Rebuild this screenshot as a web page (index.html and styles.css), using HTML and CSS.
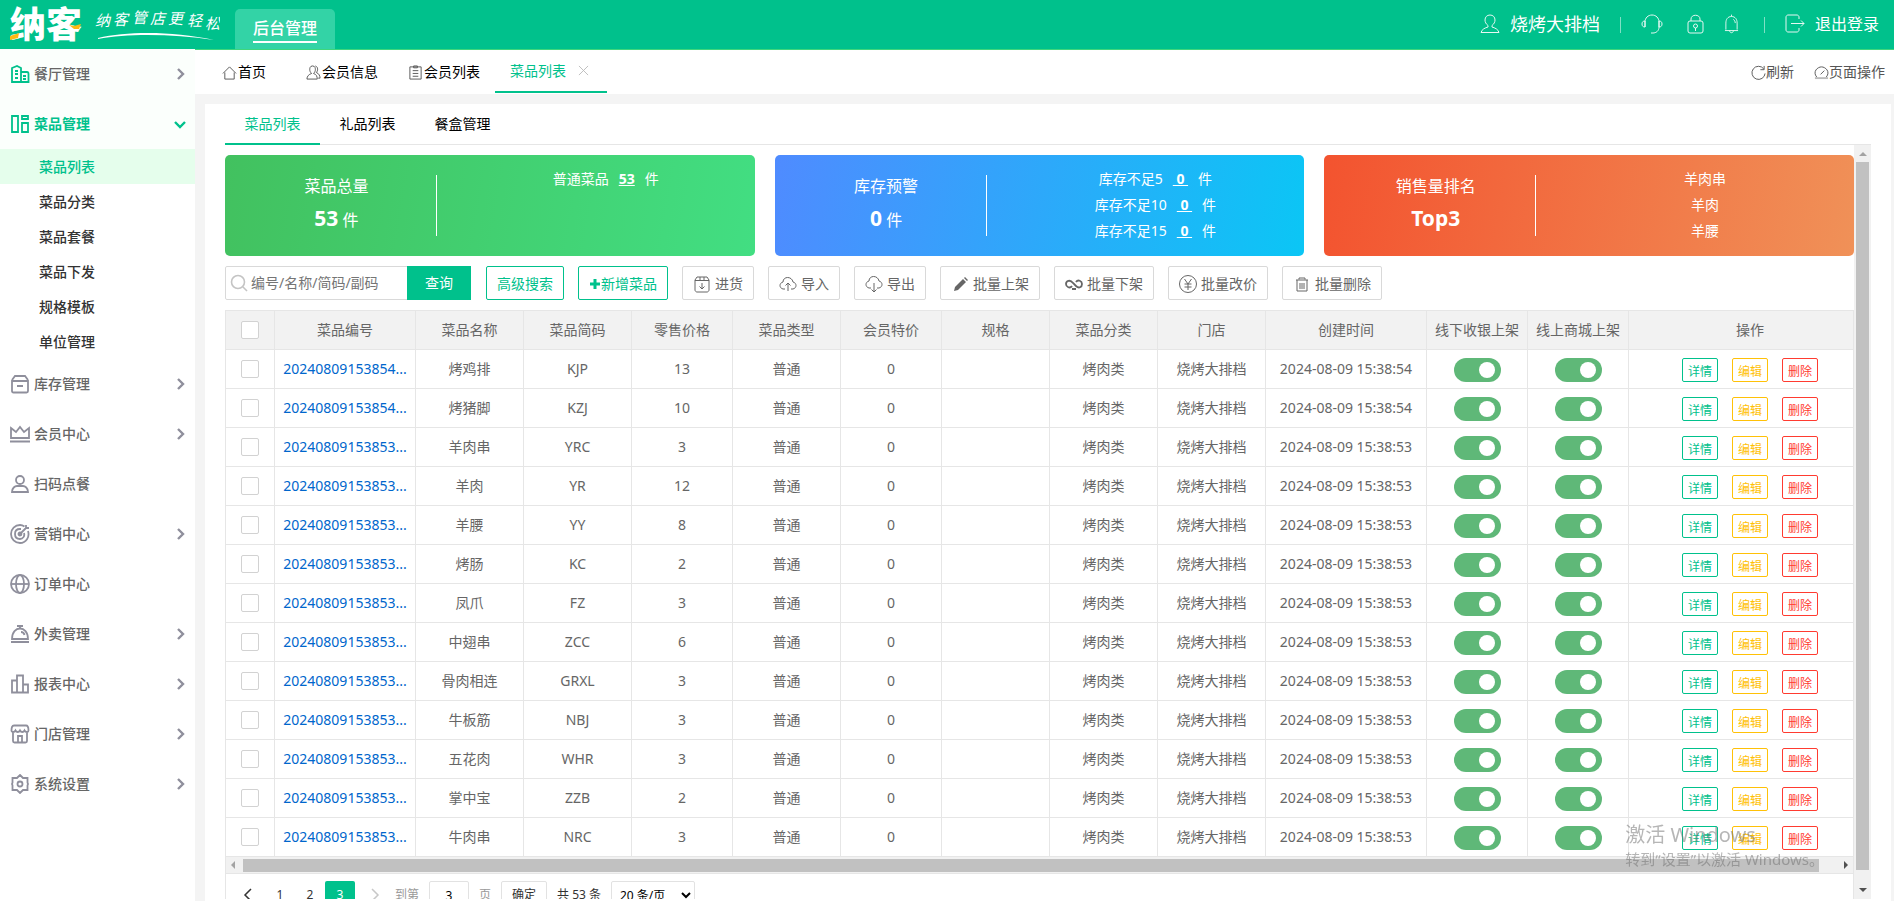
FILE: index.html
```html
<!DOCTYPE html>
<html lang="zh-CN">
<head>
    <meta charset="UTF-8">
    <title>菜品列表</title>
    <link rel="stylesheet" href="styles.css">
</head>
<body>
    <header class="header">
        <svg class="logo" width="220" height="49" viewBox="0 0 220 49" role="img" aria-label="纳客">
            <text class="logo-name" x="10" y="38">纳客</text>
            <path d="M10 36l9-3-1 5-8 2zM69 25l5 1 7-2-2 5-5 0z" fill="#fdb913"/>
            <text class="logo-slogan" x="95 113 132 150 168 187 205" y="26 25 23 24 24 26 29">纳客管店更轻松</text>
            <path d="M98 38c30-7 75-7 116 2-40-6-85-7-116-1z" fill="#fff"/>
        </svg>
        <a class="header-tab" href="#"><span>后台管理</span></a>
        <div class="header-right">
            <a class="user" href="#">
                <svg width="20" height="20" viewBox="0 0 20 20"><path d="M10 1c-3 0-5 2-5 5 0 2 1 4 3 5.500v1.500c-3 1-6 2-7 5.500h18c-1-3.500-4-4.500-7-5.500v-1.500c2-1.500 3-3.500 3-5.500 0-3-2-5-5-5z"/></svg>
                烧烤大排档
            </a>
            <i class="line"></i>
            <a href="#" aria-label="客服"><svg width="22" height="20" viewBox="0 0 22 20"><path d="M4 13V8c0-4 3-7 7-7s7 3 7 7v5M4 7c-2 0-3 1-3 3s1 3 3 3zM18 7c2 0 3 1 3 3s-1 3-3 3zM18 13c0 4-3 6-6 6h-2"/></svg></a>
            <a class="lock" href="#" aria-label="锁屏"><svg width="17" height="20" viewBox="0 0 17 20"><rect x="1" y="7" width="15" height="12" rx="2"/><path d="M4 7V5c0-5 9-5 9 0v2M8.500 14v3"/><circle cx="8.500" cy="12" r="2"/></svg></a>
            <a href="#" aria-label="消息"><svg width="15" height="20" viewBox="0 0 16 20"><path d="M8 0v2M2 16V9c0-4 2-7 6-7s6 3 6 7v7M1 17h14M6 17c0 3 4 3 4 0M10 5c1 1 2 2 2 4"/></svg></a>
            <i class="line"></i>
            <a class="logout" href="#">
                <svg width="20" height="20" viewBox="0 0 20 20"><path d="M14 5V3c0-1-1-2-2-2H3C2 1 1 2 1 3v13c0 1 1 2 2 2h9c1 0 2-1 2-2v-2M6 9.500h13M16 6.500l3 3-3 3"/></svg>
                退出登录
            </a>
        </div>
    </header>

    <div class="wrap">
        <nav class="side">
            <a class="side-item first" href="#">
                <svg class="ico" viewBox="0 0 20 20"><path d="M2 18V4l5-2 4 2v14zM11 8h6c1 0 1.500 1 1.500 2v8H11M5 7h3M5 10h3M5 14h3M13 12h3M13 15h3"/></svg>
                餐厅管理<svg class="arrow" viewBox="0 0 10 12"><path d="M2 1l5 5-5 5"/></svg>
            </a>
            <a class="side-item open" href="#">
                <svg class="ico" viewBox="0 0 20 20"><path d="M2 2h6v16H2zM12 2h6v3h-6zM12 9h6v9h-6z"/></svg>
                菜品管理<svg class="arrow" viewBox="0 0 12 12"><path d="M1 4l5 5 5-5"/></svg>
            </a>
            <div class="side-sub">
                <a class="on" href="#">菜品列表</a>
                <a href="#">菜品分类</a>
                <a href="#">菜品套餐</a>
                <a href="#">菜品下发</a>
                <a href="#">规格模板</a>
                <a href="#">单位管理</a>
            </div>
            <a class="side-item" href="#">
                <svg class="ico" viewBox="0 0 20 20"><path d="M2 6l3-4h10l3 4M2 7h16v10c0 1-.500 1.500-1.500 1.500h-13C2.500 18.500 2 18 2 17zM7 12h6"/></svg>
                库存管理<svg class="arrow" viewBox="0 0 10 12"><path d="M2 1l5 5-5 5"/></svg>
            </a>
            <a class="side-item" href="#">
                <svg class="ico" viewBox="0 0 20 20"><path d="M1 4l5 4 4-5 4 5 5-4v10H1zM0 17.500h20"/></svg>
                会员中心<svg class="arrow" viewBox="0 0 10 12"><path d="M2 1l5 5-5 5"/></svg>
            </a>
            <a class="side-item" href="#">
                <svg class="ico" viewBox="0 0 20 20"><circle cx="10" cy="6" r="4"/><path d="M2 18c0-4 3-6 5-6h6c2 0 5 2 5 6z"/></svg>
                扫码点餐
            </a>
            <a class="side-item" href="#">
                <svg class="ico" viewBox="0 0 20 20"><path d="M18 7c2 6-2 12-8 12-5 0-9-4-9-9s4-9 9-9c2 0 3 .500 4.500 1.500M14 9c1 3-1 6-4 6s-5-2-5-5 2-5 5-5h1M9 11l7-7M16 1v3h3"/><circle cx="10" cy="10" r="1.500"/></svg>
                营销中心<svg class="arrow" viewBox="0 0 10 12"><path d="M2 1l5 5-5 5"/></svg>
            </a>
            <a class="side-item" href="#">
                <svg class="ico" viewBox="0 0 20 20"><circle cx="10" cy="10" r="9"/><ellipse cx="10" cy="10" rx="4" ry="9"/><path d="M1 10h18"/></svg>
                订单中心
            </a>
            <a class="side-item" href="#">
                <svg class="ico" viewBox="0 0 20 20"><path d="M7 2h6M10 2v3M2 15c0-14 16-14 16 0zM1 18h18M11 8c2 0 3 1 3.500 3"/></svg>
                外卖管理<svg class="arrow" viewBox="0 0 10 12"><path d="M2 1l5 5-5 5"/></svg>
            </a>
            <a class="side-item" href="#">
                <svg class="ico" viewBox="0 0 20 20"><path d="M7 18.500H2V6.500h5M7 18.500V1.500h6v17zM13 10.500h5v8h-5"/></svg>
                报表中心<svg class="arrow" viewBox="0 0 10 12"><path d="M2 1l5 5-5 5"/></svg>
            </a>
            <a class="side-item" href="#">
                <svg class="ico" viewBox="0 0 20 20"><path d="M3 8v9c0 1 .500 1.500 1.500 1.500h11c1 0 1.500-.500 1.500-1.500V8M4 1.500h12c2 0 2.500 2 2.500 5 0 2-3 2-4 0-1 2-3.500 2-4.500 0-1 2-3.500 2-4.500 0-1 2-4 2-4 0 0-3 .500-5 2.500-5zM8 18v-6h4v6"/></svg>
                门店管理<svg class="arrow" viewBox="0 0 10 12"><path d="M2 1l5 5-5 5"/></svg>
            </a>
            <a class="side-item" href="#">
                <svg class="ico" viewBox="0 0 20 20"><path d="M10 1l3 3h4.500v4.500L18 10l-.500 1.500V16H13l-3 3-3-3H2.500v-4.500L2 10l.500-1.500V4H7z"/><circle cx="10" cy="10" r="2.500"/></svg>
                系统设置<svg class="arrow" viewBox="0 0 10 12"><path d="M2 1l5 5-5 5"/></svg>
            </a>
        </nav>

        <div class="main">
            <div class="tabs">
                <a class="home" href="#"><svg viewBox="0 0 16 16"><path d="M1 9l7-7 7 7M3 8v7h10V8"/></svg>首页</a>
                <a href="#"><svg viewBox="0 0 16 16"><path d="M7 1C4 1 4 4 4 5s.500 3 2 4c-3 1-5 3-5 6h11c0-3-1-5-4-6 1.500-1 2-3 2-4s0-4-3-4zM10 1c3 1 3 5 1 7 3 1 4 4 4 6h-2"/></svg>会员信息</a>
                <a href="#"><svg viewBox="0 0 16 16"><path d="M2 2h12v13H2zM6 1h4v2H6zM5 6h6M5 9h6M5 12h6"/></svg>会员列表</a>
                <a class="on" href="#">菜品列表<svg class="close" viewBox="0 0 12 12"><path d="M1 1l10 10M11 1L1 11"/></svg></a>
                <div class="tabs-right">
                    <a href="#"><svg viewBox="0 0 16 16"><path d="M13.500 4A7 7 0 1 0 15 9M14 1v4h-4"/></svg>刷新</a>
                    <a href="#"><svg viewBox="0 0 16 16"><path d="M3 13C-2 7 4 2 8 2s10 5 5 11M7 10l4-4"/><path d="M1 14h14" stroke="#bbb" stroke-width="2"/></svg>页面操作</a>
                </div>
            </div>

            <div class="panel">
                <div class="subtabs">
                    <a class="on" href="#">菜品列表</a>
                    <a href="#">礼品列表</a>
                    <a href="#">餐盒管理</a>
                </div>
                <div class="scroll">
                    <div class="content">
                        <div class="cards">
                            <div class="card green">
                                <div class="card-l"><p>菜品总量</p><p><b>53</b> 件</p></div>
                                <div class="card-r"><p>普通菜品<a href="#">53</a>件</p></div>
                            </div>
                            <div class="card blue">
                                <div class="card-l"><p>库存预警</p><p><b>0</b> 件</p></div>
                                <div class="card-r">
                                    <p>库存不足5<a href="#">&nbsp;0&nbsp;</a>件</p>
                                    <p>库存不足10<a href="#">&nbsp;0&nbsp;</a>件</p>
                                    <p>库存不足15<a href="#">&nbsp;0&nbsp;</a>件</p>
                                </div>
                            </div>
                            <div class="card orange">
                                <div class="card-l"><p>销售量排名</p><p><b>Top3</b></p></div>
                                <div class="card-r"><p>羊肉串</p><p>羊肉</p><p>羊腰</p></div>
                            </div>
                        </div>

                        <div class="toolbar">
                            <div class="search">
                                <label for="key"><svg width="18" height="18" viewBox="0 0 18 18"><circle cx="8" cy="8" r="6.500"/><path d="M13 13l4 4"/></svg></label>
                                <input type="text" id="key" placeholder="编号/名称/简码/副码">
                                <button type="button">查询</button>
                            </div>
                            <button type="button" class="btn main-btn">高级搜索</button>
                            <button type="button" class="btn main-btn"><svg class="plus" viewBox="0 0 12 12"><path d="M6 1v10M1 6h10"/></svg>新增菜品</button>
                            <button type="button" class="btn"><svg viewBox="0 0 18 18"><path d="M2 5l2-3h10l2 3v10c0 1-1 2-2 2H4c-1 0-2-1-2-2zM2 5.500h14M7 2v3M11 2v3M9 8v6M6.500 11.500L9 14l2.500-2.500"/></svg>进货</button>
                            <button type="button" class="btn"><svg viewBox="0 0 18 18"><path d="M6 14H4c-4-1-4-6 0-7 0-6 9-6 10 0 4 1 4 6 0 7h-2M9 16V8M6.500 10.500L9 8l2.500 2.500"/></svg>导入</button>
                            <button type="button" class="btn"><svg viewBox="0 0 18 18"><path d="M6 13H4c-4-1-4-6 0-7 0-6 9-6 10 0 4 1 4 6 0 7h-2M9 8v9M6.500 14.500L9 17l2.500-2.500"/></svg>导出</button>
                            <button type="button" class="btn"><svg viewBox="0 0 18 18"><path class="fill" d="M3 16l1-4 8-8 3 3-8 8zM13 3l1-1 3 3-1 1z"/></svg>批量上架</button>
                            <button type="button" class="btn"><svg class="thick" viewBox="0 0 18 18"><path d="M7 11c-2 3-6 1-6-2s4-5 7-1l3 3c3 3 6 1 6-2s-4-5-6-2M7 14h4"/></svg>批量下架</button>
                            <button type="button" class="btn"><svg viewBox="0 0 18 18"><circle cx="9" cy="9" r="8.500"/><path d="M5.500 4L9 9l3.500-5M9 9v6M5.500 9h7M5.500 12h7"/></svg>批量改价</button>
                            <button type="button" class="btn"><svg viewBox="0 0 18 18"><path d="M3 5h12M6 4.500V3h6v1.500M4 5v11h10V5M7 8v6M9 8v6M11 8v6"/></svg>批量删除</button>
                        </div>

                        <div class="grid">
                            <table>
                                <colgroup>
                                    <col class="w-check"><col class="w-no"><col class="w-m"><col class="w-m"><col class="w-s"><col class="w-m"><col class="w-s"><col class="w-m"><col class="w-m"><col class="w-m"><col class="w-time"><col class="w-s"><col class="w-s"><col>
                                </colgroup>
                                <thead>
                                    <tr>
                                        <th><input type="checkbox" class="check" aria-label="全选"></th>
                                        <th>菜品编号</th><th>菜品名称</th><th>菜品简码</th><th>零售价格</th><th>菜品类型</th><th>会员特价</th><th>规格</th><th>菜品分类</th><th>门店</th><th>创建时间</th><th>线下收银上架</th><th>线上商城上架</th><th>操作</th>
                                    </tr>
                                </thead>
                                <tbody id="rows"></tbody>
                            </table>
                            <div class="hbar"><i class="tri left"></i><i class="thumb"></i><i class="tri right"></i></div>
                            <div class="page">
                                <a href="#" aria-label="上一页"><svg viewBox="0 0 10 14"><path d="M8 1L2 7l6 6"/></svg></a>
                                <a href="#">1</a>
                                <a href="#">2</a>
                                <a class="on" href="#">3</a>
                                <a class="off" href="#" aria-label="下一页"><svg viewBox="0 0 10 14"><path d="M2 1l6 6-6 6"/></svg></a>
                                <label for="pageNo">到第</label>
                                <input type="text" id="pageNo" value="3">
                                <label for="pageNo">页</label>
                                <button type="button">确定</button>
                                <span>共 53 条</span>
                                <select aria-label="每页条数"><option>20 条/页</option></select>
                            </div>
                        </div>
                    </div>
                    <div class="vbar"><i class="tri up"></i><i class="thumb"></i><i class="tri down"></i></div>
                </div>
            </div>
        </div>
    </div>

    <div class="activate"><p>激活 Windows</p><p>转到“设置”以激活 Windows。</p></div>

    <script>
        var data = [
            ['烤鸡排', 'KJP', 13, 54], ['烤猪脚', 'KZJ', 10, 54], ['羊肉串', 'YRC', 3, 53],
            ['羊肉', 'YR', 12, 53], ['羊腰', 'YY', 8, 53], ['烤肠', 'KC', 2, 53],
            ['凤爪', 'FZ', 3, 53], ['中翅串', 'ZCC', 6, 53], ['骨肉相连', 'GRXL', 3, 53],
            ['牛板筋', 'NBJ', 3, 53], ['五花肉', 'WHR', 3, 53], ['掌中宝', 'ZZB', 2, 53],
            ['牛肉串', 'NRC', 3, 53]
        ];
        var html = '';
        data.forEach(function (d) {
            html += '<tr><td><input type="checkbox" class="check" aria-label="选择' + d[0] + '"></td>' +
                '<td><a class="no" href="#">202408091538' + d[3] + '...</a></td>' +
                '<td>' + d[0] + '</td><td>' + d[1] + '</td><td>' + d[2] + '</td>' +
                '<td>普通</td><td>0</td><td></td><td>烤肉类</td><td>烧烤大排档</td>' +
                '<td>2024-08-09 15:38:' + d[3] + '</td>' +
                '<td><input type="checkbox" class="switch" aria-label="线下收银上架" checked></td>' +
                '<td><input type="checkbox" class="switch" aria-label="线上商城上架" checked></td>' +
                '<td><div class="ops"><button type="button">详情</button><button type="button" class="edit">编辑</button><button type="button" class="del">删除</button></div></td></tr>';
        });
        document.getElementById('rows').innerHTML = html;
    </script>
</body>
</html>
```
FILE: styles.css
```css
* {
    box-sizing: border-box;
}
body {
    margin: 0;
    height: 100vh;
    display: flex;
    flex-direction: column;
    overflow: hidden;
    background: #fff;
    color: #666;
    font: 14px/20px "Noto Sans", "Noto Sans CJK SC", sans-serif;
}
a {
    color: inherit;
    text-decoration: none;
}
p {
    margin: 0;
}
button, input, select {
    font: inherit;
    color: inherit;
    margin: 0;
}
button {
    cursor: pointer;
}
svg {
    flex: none;
    fill: none;
    stroke: currentColor;
}

/* header */
.header {
    height: 50px;
    flex: none;
    display: flex;
    background: #00c18c;
    border-bottom: 1px solid #3fd67c;
    color: #fff;
}
.logo {
    margin-right: 15px;
    stroke: none;
    fill: #fff;
}
.logo-name {
    font-size: 36px;
    font-weight: 900;
}
.logo-slogan {
    font-size: 15px;
    font-style: italic;
}
.header-tab {
    align-self: flex-end;
    width: 100px;
    height: 40px;
    display: flex;
    justify-content: center;
    background: #33d3a6;
    border-radius: 5px 5px 0 0;
    font-size: 16px;
    font-weight: 500;
}
.header-tab span {
    height: 34px;
    line-height: 38px;
    border-bottom: 2px solid #fff;
}
.header-right {
    margin-left: auto;
    padding-right: 15px;
    display: flex;
    align-items: center;
    gap: 20px;
    height: 50px;
}
.header-right a {
    display: flex;
    align-items: center;
    gap: 10px;
    padding-bottom: 2px;
}
.header-right svg {
    opacity: .9;
}
.header-right .user {
    font-size: 18px;
}
.header-right .lock {
    margin-left: 4px;
}
.header-right .logout {
    font-size: 16px;
}
.line {
    width: 1px;
    height: 16px;
    background: #80e0c5;
}
.lock + a {
    margin-right: 5px;
}

/* sidebar */
.wrap {
    flex: 1;
    min-height: 0;
    display: flex;
}
.side {
    width: 195px;
    flex: none;
    font-weight: 500;
}
.side-item {
    height: 50px;
    display: flex;
    align-items: center;
    gap: 4px;
    padding: 0 9px 0 10px;
}
.ico {
    width: 20px;
    height: 20px;
    color: #8f8f9c;
    stroke-width: 1.8;
}
.arrow {
    width: 10px;
    height: 12px;
    margin-left: auto;
    color: #8f8f9c;
    stroke-width: 2.4;
}
.side-item.first, .side-item.open {
    background: #fbfffc;
}
.first {
    margin-top: -1px;
}
.first .ico, .open, .open .ico, .open .arrow {
    color: #00c18c;
}
.open .arrow {
    width: 12px;
}
.side-item.open {
    font-weight: 700;
}
.side-sub a {
    display: block;
    height: 35px;
    padding-left: 39px;
    line-height: 35px;
    color: #333;
}
.side-sub .on {
    color: #00c18c;
    background: #e5feec;
}

/* page tabs */
.main {
    flex: 1;
    min-width: 0;
    display: flex;
    flex-direction: column;
    background: #f4f4f4;
}
.tabs {
    height: 44px;
    flex: none;
    display: flex;
    padding-left: 12px;
    background: #fff;
    color: #000;
}
.tabs a {
    display: flex;
    align-items: center;
    gap: 1px;
    padding: 0 15px;
}
.tabs svg {
    width: 15px;
    height: 15px;
    color: #555;
}
.tabs .home {
    margin-right: 10px;
}
.tabs .on {
    height: 43px;
    padding-right: 18px;
    color: #00c18c;
    border-bottom: 2px solid #00c18c;
}
.tabs .close {
    width: 11px;
    height: 11px;
    margin-left: 11px;
    color: #bbb;
}
.tabs-right {
    margin-left: auto;
    padding-right: 9px;
    display: flex;
    gap: 20px;
    color: #555;
}
.tabs-right a {
    padding: 0;
    gap: 0;
}

/* panel */
.panel {
    flex: 1;
    min-height: 0;
    margin: 10px 3px 0 10px;
    padding: 0 20px 2px;
    display: flex;
    flex-direction: column;
    background: #fff;
}
.subtabs {
    height: 41px;
    flex: none;
    display: flex;
    border-bottom: 1px solid #e6e6e6;
    color: #000;
}
.subtabs a {
    width: 95px;
    height: 41px;
    line-height: 40px;
    text-align: center;
}
.subtabs .on {
    color: #00c18c;
    border-bottom: 2px solid #00c18c;
}
.scroll {
    flex: 1;
    min-height: 0;
    display: flex;
    overflow: hidden;
}
.content {
    flex: 1;
    min-width: 0;
    padding-top: 10px;
}

/* cards */
.cards {
    display: grid;
    grid-template-columns: repeat(3, 1fr);
    gap: 20px;
}
.card {
    height: 101px;
    display: flex;
    align-items: center;
    border-radius: 5px;
    color: #fff;
}
.green {
    background: linear-gradient(100deg, #42c15f, #42de82);
}
.blue {
    background: linear-gradient(100deg, #4f8bff, #0bc6f5);
}
.orange {
    background: linear-gradient(100deg, #f3532f, #f09158);
}
.card-l {
    width: 40%;
    height: 61px;
    padding: 0 0 5px 12px;
    border-right: 1px solid #fff;
    text-align: center;
    font-size: 16px;
    line-height: 32px;
    display: flex;
    flex-direction: column;
    justify-content: center;
}
.card-l b {
    font-size: 21px;
}
.card-r {
    flex: 1;
    height: 80px;
    padding-left: 20px;
    text-align: center;
    line-height: 26px;
}
.card-r a {
    margin: 0 10px;
    font-weight: 700;
    text-decoration: underline;
}

/* toolbar */
.toolbar {
    margin: 10px 0;
    display: flex;
    gap: 14px;
}
.search {
    width: 246px;
    height: 34px;
    margin-right: 1px;
    display: flex;
    align-items: center;
    border: 1px solid #d9d9d9;
    border-radius: 2px;
}
.search label {
    display: flex;
    padding: 0 3px 0 4px;
    color: #c4c4c4;
}
.search svg {
    stroke-width: 1.6;
}
.search input {
    flex: 1;
    min-width: 0;
    padding: 0;
    border: 0;
    outline: 0;
}
.search input::placeholder {
    color: #757575;
}
.search button {
    width: 64px;
    height: 34px;
    margin-right: -1px;
    border: 0;
    background: #00c18c;
    color: #fff;
}
.btn {
    height: 34px;
    padding: 1px 10px 0;
    display: flex;
    align-items: center;
    gap: 4px;
    background: #fff;
    border: 1px solid #d9d9d9;
    border-radius: 2px;
}
.btn svg {
    width: 18px;
    height: 18px;
}
.btn .thick {
    stroke-width: 1.8;
}
.btn .fill {
    fill: currentColor;
    stroke: none;
}
.main-btn {
    gap: 0;
    border-color: #00c18c;
    color: #00c18c;
}
.btn .plus {
    width: 12px;
    height: 12px;
    stroke-width: 3;
}

/* table */
.grid {
    border: 1px solid #e6e6e6;
}
table {
    width: 100%;
    table-layout: fixed;
    border-collapse: separate;
    border-spacing: 0;
}
.w-check { width: 49px; }
.w-no { width: 141px; }
.w-m { width: 108px; }
.w-s { width: 101px; }
.w-time { width: 161px; }
th, td {
    height: 39px;
    padding: 0;
    border-right: 1px solid #e6e6e6;
    border-bottom: 1px solid #e6e6e6;
    text-align: center;
    font-weight: 400;
    white-space: nowrap;
}
th:last-child, td:last-child {
    padding-left: 18px;
    border-right: 0;
}
th {
    background: #f2f2f2;
}
.no {
    color: #0066cc;
}
.check {
    appearance: none;
    display: block;
    width: 18px;
    height: 18px;
    margin: 0 auto;
    background: #fff;
    border: 1px solid #d2d2d2;
    border-radius: 2px;
}
.switch {
    appearance: none;
    display: block;
    width: 47px;
    height: 24px;
    margin: 2px auto 0;
    padding: 4px 6px;
    background: #5fb878;
    border-radius: 12px;
}
.switch::before {
    content: "";
    display: block;
    width: 16px;
    height: 16px;
    margin-left: auto;
    background: #fff;
    border-radius: 50%;
}
.ops {
    display: flex;
    justify-content: center;
    gap: 14px;
    padding-top: 2px;
}
.ops button {
    width: 36px;
    height: 24px;
    padding: 4px 0 0;
    background: #fff;
    border: 1px solid #00c18c;
    border-radius: 2px;
    color: #00c18c;
    font-size: 12px;
    line-height: 18px;
}
.ops .edit {
    border-color: #ffc107;
    color: #ffc107;
}
.ops .del {
    border-color: #ff3b30;
    color: #ff3b30;
}

/* scroll bars */
.hbar {
    height: 17px;
    display: flex;
    align-items: center;
    background: #f1f1f1;
    border-bottom: 1px solid #e6e6e6;
}
.hbar .thumb {
    flex: 1;
    height: 13px;
    margin: 0 25px 0 4px;
    background: #c1c1c1;
}
.vbar {
    width: 17px;
    display: flex;
    flex-direction: column;
    align-items: center;
    background: #f1f1f1;
}
.vbar .thumb {
    flex: 1;
    width: 13px;
    margin: 6px 0 18px;
    background: #c1c1c1;
}
.tri {
    border: 4px solid transparent;
}
.left {
    margin-left: 5px;
    border-right-color: #a3a3a3;
    border-left-width: 0;
    margin-right: 4px;
}
.right {
    margin-right: 5px;
    border-left-color: #505050;
    border-right-width: 0;
}
.up {
    margin-top: 7px;
    border-bottom-color: #a3a3a3;
    border-top-width: 0;
}
.down {
    margin-bottom: 7px;
    border-top-color: #505050;
    border-bottom-width: 0;
}

/* pagination */
.page {
    padding: 7px 5px;
    display: flex;
    align-items: center;
    font-size: 12px;
    color: #333;
}
.page a {
    width: 30px;
    height: 28px;
    display: flex;
    align-items: center;
    justify-content: center;
    border-radius: 2px;
}
.page a:first-child, .page .off {
    width: 34px;
}
.page .on {
    background: #00c18c;
    color: #fff;
}
.page .off {
    color: #c8c8c8;
    margin: 0 3px;
}
.page svg {
    width: 10px;
    height: 14px;
    stroke-width: 1.5;
}
.page label {
    color: #999;
}
.page input {
    width: 40px;
    height: 28px;
    margin: 0 10px;
    border: 1px solid #e2e2e2;
    border-radius: 2px;
    text-align: center;
    color: #000;
}
.page button {
    width: 46px;
    height: 28px;
    margin: 0 10px;
    padding: 0;
    background: #fff;
    border: 1px solid #e2e2e2;
    border-radius: 2px;
}
.page select {
    width: 84px;
    height: 28px;
    margin-left: 10px;
    padding: 0 4px;
    background: #fff;
    border: 1px solid #e2e2e2;
    border-radius: 2px;
    color: #000;
}

.activate {
    position: fixed;
    right: 70px;
    bottom: 32px;
    color: rgba(110, 110, 110, .5);
    font-size: 15px;
    line-height: 20px;
    pointer-events: none;
}
.activate p:first-child {
    font-size: 20px;
    line-height: 28px;
}
```
